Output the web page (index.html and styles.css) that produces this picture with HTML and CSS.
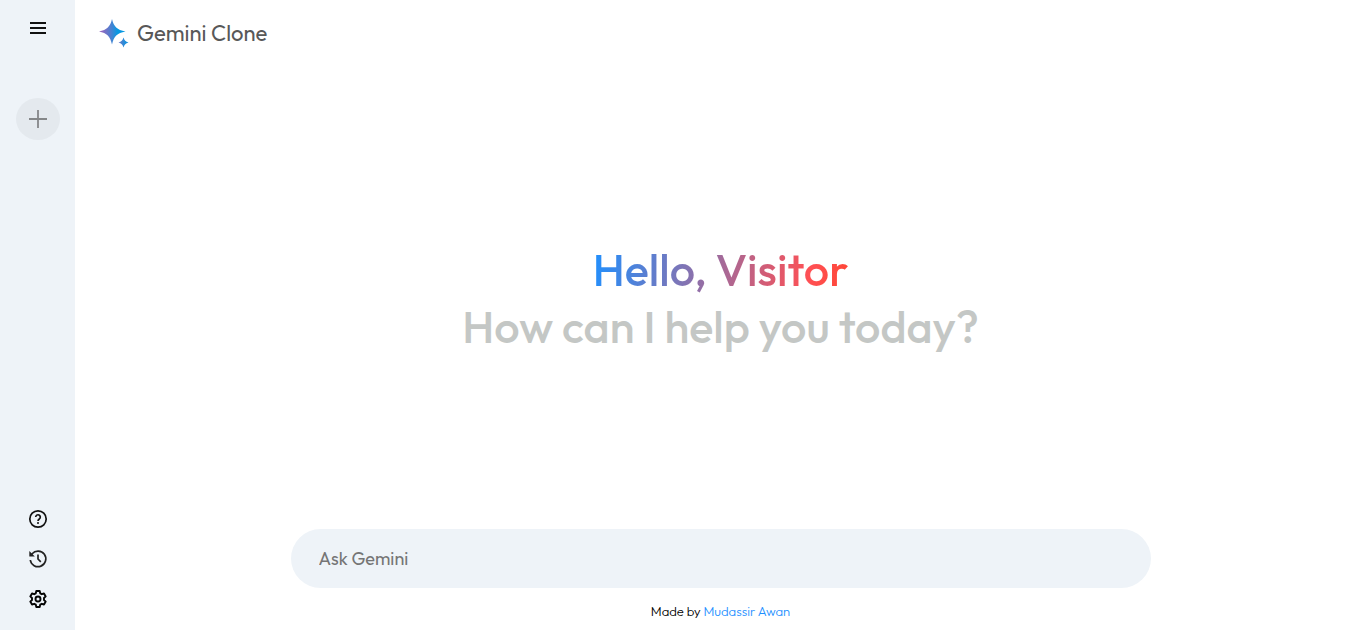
FILE: index.html
```html
<!DOCTYPE html>
<html lang="en">
<head>
<meta charset="utf-8">
<meta name="viewport" content="width=device-width, initial-scale=1">
<title>Gemini Clone</title>
<link rel="stylesheet" href="styles.css">
</head>
<body>
<div class="app">
  <nav class="sidebar" aria-label="Sidebar">
    <div class="sidebar-top">
      <button class="icon-button" type="button" aria-label="Menu">
        <svg width="24" height="24" viewBox="0 0 24 24" fill="none" stroke="#111" stroke-width="1.8"><path d="M4 7h16M4 12h16M4 17h16"/></svg>
      </button>
      <button class="new-chat" type="button" aria-label="New chat">
        <svg width="20" height="20" viewBox="0 0 20 20" fill="none" stroke="#858789" stroke-width="1.8"><path d="M10 1v18M1 10h18"/></svg>
      </button>
    </div>
    <div class="sidebar-bottom">
      <button class="icon-button" type="button" aria-label="Help">
        <svg width="20" height="20" viewBox="0 0 20 20" fill="none" stroke="#111" stroke-width="1.7"><circle cx="10" cy="10" r="8.2"/><path d="M7.7 8.1a2.3 2.3 0 1 1 3.700 1.800c-.8.6-1.400 1-1.400 2"/><circle cx="10" cy="14" r="1" fill="#111" stroke="none"/></svg>
      </button>
      <button class="icon-button" type="button" aria-label="Activity">
        <svg width="20" height="20" viewBox="0 0 20 20" fill="none" stroke="#222" stroke-width="1.7"><path d="M2.300 11a7.800 7.800 0 1 0 1.800-6.200L2.900 6"/><path d="M1.300 2v5.500h5.500z" fill="#222" stroke="none"/><path d="M10 5.500V10l2.800 2.800"/></svg>
      </button>
      <button class="icon-button" type="button" aria-label="Settings">
        <svg width="20" height="20" viewBox="0 0 20 20" fill="none" stroke="#050505" stroke-width="1.900" stroke-linejoin="round"><path d="M8.300 2h3.400l.5 2.300 1.600.9 2.200-.7 1.700 2.900-1.700 1.600v2l1.700 1.600-1.700 2.900-2.200-.7-1.600.9-.5 2.300H8.300l-.5-2.300-1.600-.9-2.200.7-1.700-2.900L4 11V9L2.300 7.400 4 4.500l2.200.7 1.600-.9z"/><circle cx="10" cy="10" r="2.500"/></svg>
      </button>
    </div>
  </nav>
  <main class="main">
    <header class="header">
      <svg width="30" height="30" viewBox="0 0 30 30" aria-hidden="true">
        <defs>
          <linearGradient id="star"><stop offset="0.1" stop-color="#9168c0"/><stop offset="0.45" stop-color="#4c80d0"/><stop offset="0.7" stop-color="#0798e2"/></linearGradient>
          <linearGradient id="spark"><stop offset="0" stop-color="#6b78c8"/><stop offset="0.7" stop-color="#1a90dc"/></linearGradient>
        </defs>
        <path fill="url(#star)" d="M13 1C14.800 8.500 18 12 26.500 13.500 18 15 14.800 18.500 13 26.500 11.200 18.500 8 15 0 13.500 8 12 11.200 8.500 13 1z"/>
        <path fill="url(#spark)" d="M24.500 19.500c1 3 2 4 5 5-3 1-4 2-5 5-1-3-2-4-5-5 3-1 4-2 5-5z"/>
      </svg>
      <span class="brand">Gemini Clone</span>
    </header>
    <section class="greeting">
      <h1 class="hello">Hello, Visitor</h1>
      <p class="question">How can I help you today?</p>
    </section>
    <footer class="footer">
      <input class="prompt" type="text" placeholder="Ask Gemini" aria-label="Ask Gemini">
      <p class="credit">Made by <a class="author" href="#">Mudassir Awan</a></p>
    </footer>
  </main>
</div>
</body>
</html>
```
FILE: styles.css
```css
* { box-sizing: border-box; margin: 0; padding: 0; }
body { font-family: Outfit, Lato, "Liberation Sans", sans-serif; background: #fff; color: #000; }
.app { display: flex; min-height: 100vh; }
.sidebar {
  flex: 0 0 75px;
  display: flex;
  flex-direction: column;
  justify-content: space-between;
  padding: 16px 0;
  background: #eef3f8;
}
.sidebar-top, .sidebar-bottom { display: flex; flex-direction: column; align-items: center; }
.sidebar-top { gap: 58px; }
.sidebar-bottom { gap: 16px; padding-bottom: 3px; }
.icon-button, .new-chat { display: flex; align-items: center; justify-content: center; border: 0; background: none; cursor: pointer; }
.icon-button { width: 24px; height: 24px; }
.new-chat { width: 44px; height: 42px; border-radius: 50%; background: #e4e9ee; }
.main { flex: 1; min-width: 0; display: flex; flex-direction: column; }
.header { display: flex; align-items: center; gap: 8px; height: 66px; padding: 0 24px; }
.brand { font-size: 22px; color: #585858; }
.greeting {
  flex: 1;
  display: flex;
  flex-direction: column;
  align-items: center;
  justify-content: center;
  padding: 0 16px;
  font-size: 45px;
  font-weight: 500;
  line-height: 57px;
  text-align: center;
}
.hello, .question { font-size: inherit; font-weight: inherit; }
.hello { background: linear-gradient(100deg, #1e90ff, #ff5054 84%, #ff4533); background-clip: text; -webkit-background-clip: text; color: transparent; }
.question { color: #c4c7c5; }
.footer { display: flex; flex-direction: column; align-items: center; padding: 0 16px 11px; }
.prompt {
  width: 100%;
  max-width: 860px;
  height: 59px;
  padding: 0 28px;
  border: 0;
  border-radius: 30px;
  outline: 0;
  background: #eef3f8;
  color: #222;
  font: inherit;
  font-size: 18px;
}
.prompt::placeholder { color: #757575; }
.credit { margin-top: 15px; font-size: 13px; font-weight: 300; line-height: 16px; }
.author { color: #1e90ff; text-decoration: none; }
```
